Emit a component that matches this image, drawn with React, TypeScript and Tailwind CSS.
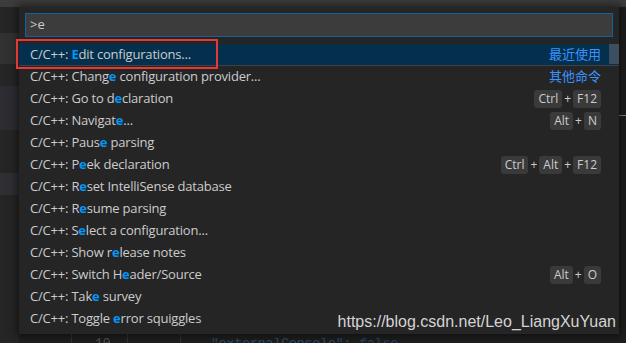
import React from 'react';

type Item = {
  pre: string;
  hit: string;
  post: string;
  desc?: string;
  keys?: string[];
};

const ITEMS: Item[] = [
  { pre: 'C/C++: ', hit: 'E', post: 'dit configurations...', desc: '最近使用' },
  { pre: 'C/C++: Chang', hit: 'e', post: ' configuration provider...', desc: '其他命令' },
  { pre: 'C/C++: Go to d', hit: 'e', post: 'claration', keys: ['Ctrl', 'F12'] },
  { pre: 'C/C++: Navigat', hit: 'e', post: '...', keys: ['Alt', 'N'] },
  { pre: 'C/C++: Paus', hit: 'e', post: ' parsing' },
  { pre: 'C/C++: P', hit: 'e', post: 'ek declaration', keys: ['Ctrl', 'Alt', 'F12'] },
  { pre: 'C/C++: R', hit: 'e', post: 'set IntelliSense database' },
  { pre: 'C/C++: R', hit: 'e', post: 'sume parsing' },
  { pre: 'C/C++: S', hit: 'e', post: 'lect a configuration...' },
  { pre: 'C/C++: Show r', hit: 'e', post: 'lease notes' },
  { pre: 'C/C++: Switch H', hit: 'e', post: 'ader/Source', keys: ['Alt', 'O'] },
  { pre: 'C/C++: Tak', hit: 'e', post: ' survey' },
  { pre: 'C/C++: Toggle ', hit: 'e', post: 'rror squiggles' },
];

function Keys({ keys }: { keys: string[] }) {
  return (
    <div className="flex items-center text-[12px] text-[#cccccc] tracking-normal">
      {keys.map((k, i) => (
        <React.Fragment key={k}>
          {i > 0 && <span className="mx-[2px]">+</span>}
          <span className="h-[18px] leading-[18px] px-[4px] rounded-[3px] bg-[#3a3a3a]">{k}</span>
        </React.Fragment>
      ))}
    </div>
  );
}

export default function App() {
  return (
    <div className="relative w-[626px] h-[343px] overflow-hidden bg-[#1e1e1e] font-['Open_Sans','Noto_Sans_CJK_SC',sans-serif]">
      {/* editor behind the picker */}
      <div className="flex flex-col h-full">
        <div className="h-[7px] bg-[#3c3c3c]" />
        <div className="flex flex-1">
          <div className="w-[19px] flex flex-col">
            <div className="h-[26px] bg-[#252526]" />
            <div className="h-[31px] bg-[#313131]" />
            <div className="h-[22px] bg-[#252526]" />
            <div className="h-[44px] bg-[#2c2c32]" />
            <div className="h-[43px] bg-[#252526]" />
            <div className="h-[22px] bg-[#2e2e33]" />
            <div className="flex-1 bg-[#252526]" />
          </div>
          <div className="flex-1 flex flex-col">
            <div className="h-[108px]" />
            <div className="h-px ml-[598px] bg-[#6a9955]" />
            <div className="flex-1" />
            <div className="flex h-[10px] font-['Liberation_Mono',monospace] text-[13px] leading-[21px] whitespace-nowrap">
              <div className="w-[53px] border-r border-[#333]" />
              <div className="w-[56px] border-r border-[#333] pl-[23px] text-[#555]">10</div>
              <div className="w-[53px] border-r border-[#333]" />
              <div className="pl-[30px] text-[#2a4d6e]">"externalConsole": <span className="text-[#27456a]">false</span>,</div>
            </div>
          </div>
        </div>
      </div>

      {/* quick pick widget */}
      <div className="absolute left-[19px] top-[7px] w-[600px] h-[327px] bg-[#252526] shadow-[0_0_8px_2px_rgba(0,0,0,0.5)] flex flex-col">
        <div className="mx-[6px] mt-[6px] h-[24px] bg-[#3c3c3c] border border-[#0e639c] flex items-center pl-[4px] text-[13px] text-[#cccccc]">
          &gt;e
        </div>
        <div className="relative mt-[7px] flex flex-col">
          {ITEMS.map((it, i) => (
            <div
              key={i}
              className={`h-[22px] flex items-center justify-between pl-[11px] pr-[18px] text-[13px] tracking-[-0.2px] whitespace-nowrap ${
                i === 0 ? 'bg-[#04304d] border-b border-[#3f3f46]' : ''
              }`}
            >
              <span className="text-[#cccccc]">
                {it.pre}
                <span className="text-[#0097fb] font-bold">{it.hit}</span>
                {it.post}
              </span>
              {it.desc && <span className="text-[#3794ff] tracking-normal">{it.desc}</span>}
              {it.keys && <Keys keys={it.keys} />}
            </div>
          ))}
          <div className="absolute right-0 top-0 w-[10px] h-[20px] bg-[#3b4f60]" />
        </div>
      </div>

      {/* annotation box */}
      <div className="absolute left-[16px] top-[39px] w-[202px] h-[30px] border-2 border-[#e53935]" />

      {/* watermark */}
      <div className="absolute right-[10px] top-[310px] font-['Liberation_Sans',Arial,sans-serif] text-[16px] leading-[24px] text-[#d4d4d4]">
        https://blog.csdn.net/Leo_LiangXuYuan
      </div>
    </div>
  );
}
